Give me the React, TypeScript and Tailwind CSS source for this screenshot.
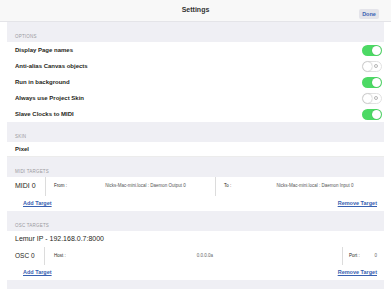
import React from "react";

function Toggle({ on }: { on: boolean }) {
  if (on) {
    return (
      <div className="flex h-[11px] w-[20px] items-center justify-end rounded-full bg-[#4cd964] px-[1px]">
        <div className="h-[9px] w-[9px] rounded-full bg-white shadow-[0_0_1px_rgba(0,0,0,0.3)]" />
      </div>
    );
  }
  return (
    <div className="flex h-[11px] w-[20px] items-center justify-between rounded-full border border-[#e2e2e2] bg-white pr-[3px]">
      <div className="h-[9px] w-[9px] rounded-full bg-white shadow-[0_0_1.5px_rgba(0,0,0,0.45)]" />
      <div className="h-[4px] w-[4px] rounded-full border border-[#b5b5b5]" />
    </div>
  );
}

function SectionLabel({ text }: { text: string }) {
  return (
    <div className="flex h-[20px] items-end bg-[#efeff4] pb-[1px] pl-[8px] text-[4.5px] uppercase tracking-[0.2px] text-[#9a9aa0]">
      {text}
    </div>
  );
}

const options = [
  { label: "Display Page names", on: true },
  { label: "Anti-alias Canvas objects", on: false },
  { label: "Run in background", on: true },
  { label: "Always use Project Skin", on: false },
  { label: "Slave Clocks to MIDI", on: true },
];

function Links() {
  return (
    <div className="flex h-[15px] items-center justify-between pl-[16px] pr-[7px] text-[5.5px] font-bold text-[#3760b0]">
      <span className="underline decoration-[0.5px] underline-offset-[1px]">Add Target</span>
      <span className="underline decoration-[0.5px] underline-offset-[1px]">Remove Target</span>
    </div>
  );
}

export default function App() {
  return (
    <div className="h-[289px] w-[391px] overflow-hidden bg-white text-[#1f1f21]" style={{ fontFamily: '"Liberation Sans", Arial, sans-serif' }}>
      <div className="relative flex h-[22px] items-center justify-center border-b border-[#e4e4e8] bg-[#f8f8f8]">
        <span className="text-[7px] font-bold text-[#333]">Settings</span>
        <div className="absolute right-[12px] top-[9px] flex h-[10px] w-[20px] items-center justify-center rounded-[2px] bg-[#e4e4ea] text-[5.5px] font-bold text-[#3a62b3]">
          Done
        </div>
      </div>

      <div className="mx-[7px]">
        <SectionLabel text="Options" />
        {options.map((o) => (
          <div key={o.label} className="flex h-[16px] items-center justify-between bg-white pl-[8px] pr-[2px]">
            <span className="text-[6px] font-bold">{o.label}</span>
            <Toggle on={o.on} />
          </div>
        ))}

        <SectionLabel text="Skin" />
        <div className="flex h-[15px] items-center border-b border-[#ececec] pl-[8px] text-[6px] font-bold">Pixel</div>

        <SectionLabel text="MIDI Targets" />
        <div className="flex h-[19px] items-stretch">
          <div className="flex w-[38px] items-center pl-[8px] text-[7px]">MIDI 0</div>
          <div className="flex w-[170px] items-center border-l border-[#dcdcdc] pl-[8px] text-[4.5px]">
            <span className="w-[22px]">From :</span>
            <span className="flex-1 text-center text-[#555]">Nicks-Mac-mini.local : Daemon Output 0</span>
          </div>
          <div className="flex flex-1 items-center border-l border-[#dcdcdc] pl-[8px] text-[4.5px]">
            <span className="w-[22px]">To :</span>
            <span className="flex-1 text-center text-[#555]">Nicks-Mac-mini.local : Daemon Input 0</span>
          </div>
        </div>
        <Links />

        <SectionLabel text="OSC Targets" />
        <div className="flex h-[16px] items-center pl-[8px] text-[7px]">Lemur IP - 192.168.0.7:8000</div>
        <div className="flex h-[18px] items-stretch">
          <div className="flex w-[37px] items-center pl-[8px] text-[6.5px]">OSC 0</div>
          <div className="flex flex-1 items-center border-l border-[#dcdcdc] pl-[9px] text-[4.5px]">
            <span className="w-[14px]">Host :</span>
            <span className="flex-1 text-center text-[#666]">0.0.0.0a</span>
          </div>
          <div className="flex w-[42px] items-center border-l border-[#dcdcdc] pl-[6px] text-[4.5px]">
            <span className="flex-1">Port :</span>
            <span className="pr-[7px] text-[#666]">0</span>
          </div>
        </div>
        <Links />
        <div className="h-[20px] bg-[#efeff4]" />
      </div>
    </div>
  );
}
